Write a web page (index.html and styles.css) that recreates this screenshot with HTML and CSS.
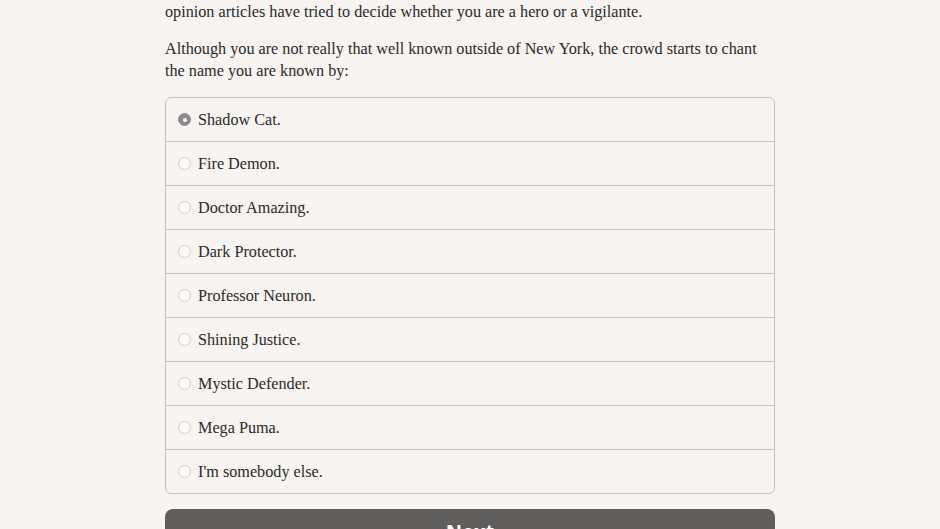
FILE: index.html
```html
<!DOCTYPE html>
<html>
<head>
<meta charset="utf-8">
<link rel="stylesheet" href="styles.css">
</head>
<body>
<main class="page">
  <p class="para">opinion articles have tried to decide whether you are a hero or a vigilante.</p>
  <p class="para">Although you are not really that well known outside of New York, the crowd starts to chant the name you are known by:</p>
  <div class="options">
    <label class="option"><span class="radio checked"></span><span class="label">Shadow Cat.</span></label>
    <label class="option"><span class="radio"></span><span class="label">Fire Demon.</span></label>
    <label class="option"><span class="radio"></span><span class="label">Doctor Amazing.</span></label>
    <label class="option"><span class="radio"></span><span class="label">Dark Protector.</span></label>
    <label class="option"><span class="radio"></span><span class="label">Professor Neuron.</span></label>
    <label class="option"><span class="radio"></span><span class="label">Shining Justice.</span></label>
    <label class="option"><span class="radio"></span><span class="label">Mystic Defender.</span></label>
    <label class="option"><span class="radio"></span><span class="label">Mega Puma.</span></label>
    <label class="option"><span class="radio"></span><span class="label">I'm somebody else.</span></label>
  </div>
  <button class="next">Next</button>
</main>
</body>
</html>
```

FILE: styles.css
```css
html, body {
  margin: 0;
  padding: 0;
  background: #f7f4f1;
  overflow: hidden;
}
.page {
  width: 610px;
  margin-left: 165px;
  padding-top: 1px;
  font-family: "Liberation Serif", "DejaVu Serif", serif;
  font-size: 16.2px;
  line-height: 22px;
  color: #2b2a29;
}
.para {
  margin: 0 0 15px 0;
}
.options {
  border: 1px solid #c6c2be;
  border-radius: 6px;
  overflow: hidden;
  margin-top: 1px;
}
.option {
  display: flex;
  align-items: center;
  height: 43px;
  padding-left: 12px;
  gap: 7px;
  border-top: 1px solid #c6c2be;
}
.option:first-child {
  border-top: none;
}
.radio {
  width: 11px;
  height: 11px;
  border-radius: 50%;
  border: 1px solid #d0cdca;
  background: #fbfaf9;
  display: flex;
  align-items: center;
  justify-content: center;
  flex: none;
}
.radio.checked {
  background: #8b8a8c;
  border-color: #8b8a8c;
}
.radio.checked::after {
  content: "";
  width: 4px;
  height: 4px;
  border-radius: 50%;
  background: #fff;
}
.next {
  display: block;
  width: 610px;
  height: 50px;
  margin-top: 15px;
  border: none;
  border-radius: 8px;
  background: #5f5e5c;
  color: #fff;
  font-family: "Open Sans", "Liberation Sans", sans-serif;
  font-weight: 700;
  font-size: 20px;
  padding: 0;
  padding-bottom: 6px;
}
```
